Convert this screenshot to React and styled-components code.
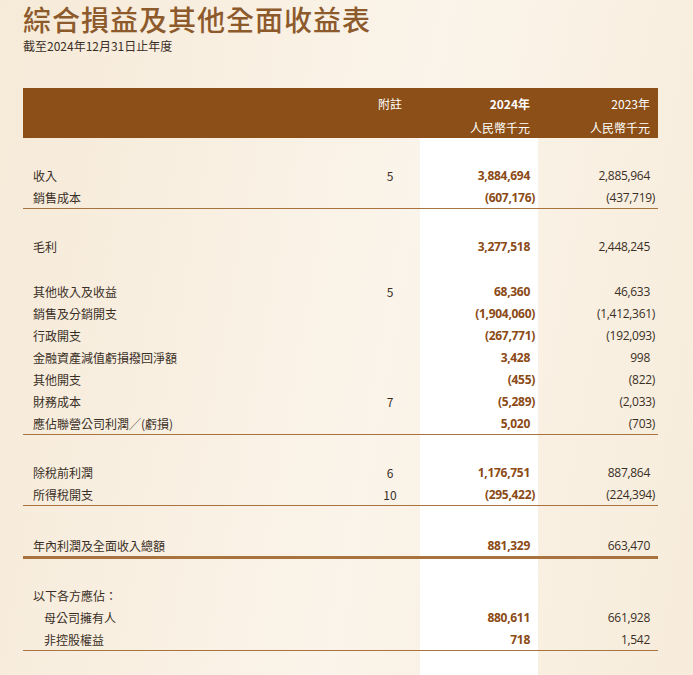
import React from "react";
import styled, { createGlobalStyle } from "styled-components";

const Global = createGlobalStyle`
  html, body { margin: 0; padding: 0; }
  body {
    background: linear-gradient(100deg, #f6ead8 0%, #fbf4ea 55%, #f7ecdb 100%);
    font-family: "Noto Sans CJK TC", "Noto Sans", sans-serif;
    width: 693px; height: 675px; overflow: hidden;
  }
`;

const Page = styled.div`padding: 0 0 0 23px; width: 635px;`;
const Title = styled.h1`
  margin: 0; font-size: 28px; font-weight: 500; color: #8d5a2c; line-height: 38px; letter-spacing: 1px;
`;
const Sub = styled.div`font-size: 12px; color: #3a2f26; line-height: 16px;`;
const Band = styled.div`
  margin-top: 34px; height: 50px; background: #8b4f17; color: #fff;
  display: grid; grid-template-columns: 337px 60px 118px 120px; font-size: 12px;
`;
const HCell = styled.div`
  display: flex; flex-direction: column; align-items: ${p => p.$center ? "center" : "flex-end"};
  padding: 4px ${p => p.$center ? "0" : "8px"} 0 0; line-height: 24px;
  font-weight: ${p => p.$bold ? 700 : 400};
  & span { font-weight: 400; }
`;
const Body = styled.div`
  padding-top: 26px; padding-bottom: 30px;
  background: linear-gradient(to right, transparent 397px, #fff 397px, #fff 515px, transparent 515px);
`;
const Group = styled.div`
  margin-top: ${p => p.$mt ?? 0}px;
  border-bottom: ${p => p.$line ? `${p.$line}px solid #a8733f` : "none"};
`;
const Row = styled.div`
  display: grid; grid-template-columns: 337px 60px 118px 120px; height: 22px; align-items: center;
  font-size: 12px; color: #3a2f26;
`;
const Label = styled.div`padding-left: ${p => p.$indent ? 21 : 10}px; white-space: nowrap;`;
const Note = styled.div`text-align: center;`;
const Num = styled.div`
  text-align: right; padding-right: ${p => p.$paren ? 3 : 8}px;
  font-weight: ${p => p.$bold ? 700 : 400}; color: ${p => p.$bold ? "#8b4a16" : "#3a2f26"};
  font-family: "Open Sans", "Noto Sans", sans-serif; font-size: 12px; letter-spacing: -0.3px;
`;

const groups = [
  { mt: 0, line: 1, rows: [["收入", "5", "3,884,694", "2,885,964"], ["銷售成本", "", "(607,176)", "(437,719)"]] },
  { mt: 26, rows: [["毛利", "", "3,277,518", "2,448,245"]] },
  { mt: 23, line: 1, rows: [
    ["其他收入及收益", "5", "68,360", "46,633"],
    ["銷售及分銷開支", "", "(1,904,060)", "(1,412,361)"],
    ["行政開支", "", "(267,771)", "(192,093)"],
    ["金融資產減值虧損撥回淨額", "", "3,428", "998"],
    ["其他開支", "", "(455)", "(822)"],
    ["財務成本", "7", "(5,289)", "(2,033)"],
    ["應佔聯營公司利潤╱(虧損)", "", "5,020", "(703)"],
  ] },
  { mt: 26, line: 1, rows: [["除稅前利潤", "6", "1,176,751", "887,864"], ["所得稅開支", "10", "(295,422)", "(224,394)"]] },
  { mt: 28, line: 3, rows: [["年內利潤及全面收入總額", "", "881,329", "663,470"]] },
  { mt: 25, line: 1, rows: [["以下各方應佔：", "", "", ""], ["母公司擁有人", "", "880,611", "661,928", 1], ["非控股權益", "", "718", "1,542", 1]] },
];

const isParen = s => s.startsWith("(");

export default function App() {
  return (
    <>
      <Global />
      <Page>
        <Title>綜合損益及其他全面收益表</Title>
        <Sub>截至2024年12月31日止年度</Sub>
        <Band>
          <div />
          <HCell $center>附註</HCell>
          <HCell $bold>2024年<span>人民幣千元</span></HCell>
          <HCell>2023年<span>人民幣千元</span></HCell>
        </Band>
        <Body>
          {groups.map((g, i) => (
            <Group key={i} $mt={g.mt} $line={g.line}>
              {g.rows.map((r, j) => (
                <Row key={j}>
                  <Label $indent={r[4]}>{r[0]}</Label>
                  <Note>{r[1]}</Note>
                  <Num $bold $paren={isParen(r[2])}>{r[2]}</Num>
                  <Num $paren={isParen(r[3])}>{r[3]}</Num>
                </Row>
              ))}
            </Group>
          ))}
        </Body>
      </Page>
    </>
  );
}
